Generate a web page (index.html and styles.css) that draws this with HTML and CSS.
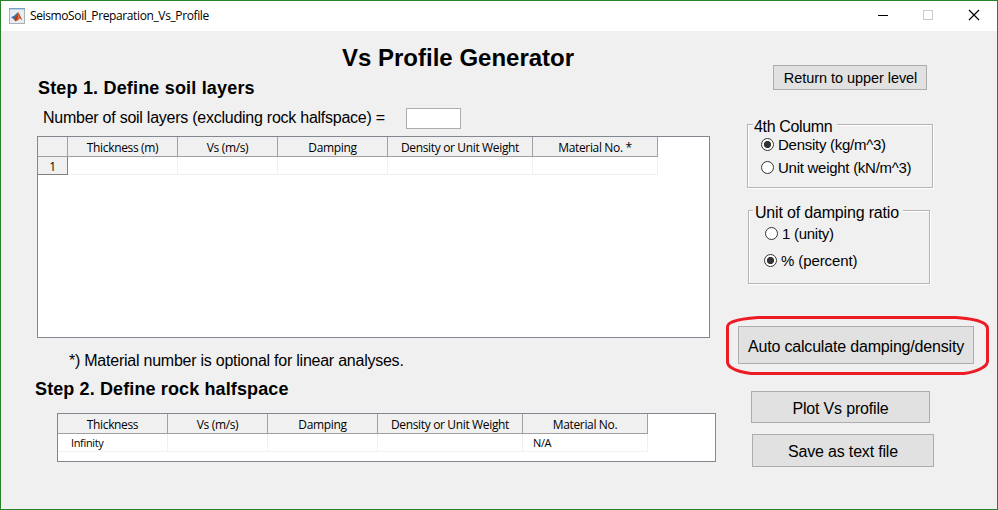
FILE: index.html
```html
<!DOCTYPE html>
<html lang="en">
<head>
<meta charset="utf-8">
<title>SeismoSoil_Preparation_Vs_Profile</title>
<link rel="stylesheet" href="styles.css">
</head>
<body>
<div class="window">
  <header class="titlebar">
    <svg class="app-icon" width="16" height="16" viewBox="0 0 16 16">
      <rect x=".5" y=".5" width="15" height="15" fill="#e9edf0" stroke="#a9b1b8"/>
      <rect x="0" y="0" width="16" height="1" fill="#7f9fbe"/>
      <rect x="1" y="1" width="14" height="1" fill="#b5d2ec"/>
      <path d="M2 9.300 5.500 7.600 8.600 4.200 7.400 9.200 5 11.400z" fill="#3c6ea5"/>
      <path d="M5 11.400 7 9 9 4l1.200 2.800-.7 3.900-2.800 2.700z" fill="#a8331b"/>
      <path d="M9 4c1.200 1.200 2.200 5.500 4.300 8.200L10.800 10.600 8.300 13.300z" fill="#e2702a"/>
      <path d="M9.200 4.300 13.300 12.200 11 9.800z" fill="#9c2a18"/>
    </svg>
    <span class="title">SeismoSoil_Preparation_Vs_Profile</span>
    <svg class="controls" width="110" height="30" viewBox="0 0 110 30" fill="none" shape-rendering="crispEdges">
      <path d="M1 14.500h10" stroke="#000"/>
      <rect x="46.500" y="9.500" width="9" height="9" stroke="#ccc"/>
      <path d="M92 9l10 10M102 9l-10 10" stroke="#000" stroke-width="1.200" shape-rendering="auto"/>
    </svg>
  </header>
  <div class="content">
    <main class="left">
      <h1>Vs Profile Generator</h1>
      <h2 class="step-one">Step 1. Define soil layers</h2>
      <div class="count-row">
        <label for="count">Number of soil layers (excluding rock halfspace) =</label>
        <input id="count" type="text">
      </div>
      <div class="grid soil">
        <div class="row head">
          <div class="cell index"></div>
          <div class="cell">Thickness (m)</div>
          <div class="cell">Vs (m/s)</div>
          <div class="cell">Damping</div>
          <div class="cell">Density or Unit Weight</div>
          <div class="cell">Material No. *</div>
        </div>
        <div class="row">
          <div class="cell index">1</div>
          <div class="cell"></div><div class="cell"></div><div class="cell"></div><div class="cell"></div><div class="cell"></div>
        </div>
      </div>
      <p class="note">*) Material number is optional for linear analyses.</p>
      <h2 class="step-two">Step 2. Define rock halfspace</h2>
      <div class="grid rock">
        <div class="row head">
          <div class="cell">Thickness</div>
          <div class="cell">Vs (m/s)</div>
          <div class="cell">Damping</div>
          <div class="cell">Density or Unit Weight</div>
          <div class="cell">Material No.</div>
        </div>
        <div class="row">
          <div class="cell value-first">Infinity</div>
          <div class="cell"></div><div class="cell"></div><div class="cell"></div>
          <div class="cell value-last">N/A</div>
        </div>
      </div>
    </main>
    <aside class="right">
      <button class="btn return">Return to upper level</button>
      <section class="group column">
        <div class="legend">4th Column</div>
        <label class="radio r1"><i class="dot on"></i><span>Density (kg/m^3)</span></label>
        <label class="radio r2"><i class="dot"></i><span>Unit weight (kN/m^3)</span></label>
      </section>
      <section class="group unit">
        <div class="legend">Unit of damping ratio</div>
        <label class="radio r3"><i class="dot"></i><span>1 (unity)</span></label>
        <label class="radio r4"><i class="dot on"></i><span>% (percent)</span></label>
      </section>
      <div class="auto-wrap">
        <button class="btn auto">Auto calculate damping/density</button>
        <svg class="ring" width="264" height="60" viewBox="0 0 264 60" fill="none">
          <path d="M32 2.500H230Q252 4 259 9Q261.500 11 261.500 14V46Q261.500 50 256 53Q249 57 238 58.500H25Q12 57 5 52.500Q1.500 50 1.500 47V12Q1.500 9 6 7Q15 3.500 32 2.500Z" stroke="#ed1c24" stroke-width="3"/>
        </svg>
      </div>
      <button class="btn plot">Plot Vs profile</button>
      <button class="btn save">Save as text file</button>
    </aside>
  </div>
</div>
</body>
</html>
```

FILE: styles.css
```css
* { box-sizing: border-box; }
body { margin: 0; font-family: "Liberation Sans", Arial, sans-serif; color: #000; white-space: nowrap; }
.window { width: 998px; height: 510px; border: 1px solid #26832a; background: #f0f0f0; overflow: hidden; }
.titlebar { height: 30px; background: #fff; display: flex; align-items: center; padding-left: 8px; }
.app-icon { display: block; margin-top: -1px; }
.title { flex: 1; padding-left: 5px; font: 12px/16px "Open Sans", "Noto Sans", sans-serif; letter-spacing: -0.38px; }
.controls { display: block; margin-right: 10px; }
.content { display: flex; }
.left { width: 724px; }
h1, h2, p { margin: 0; }
h1 { font-size: 24px; line-height: 28px; margin: 13px 0 0 341px; }
h2 { font-size: 18px; line-height: 22px; }
.step-one { margin: 5px 0 0 37px; letter-spacing: 0.18px; }
.count-row { display: flex; align-items: flex-start; margin: 9px 0 0 42px; height: 28px; font-size: 16px; line-height: 20px; letter-spacing: -0.25px; }
.count-row label { width: 363px; }
.count-row input { width: 55px; height: 21px; border: 1px solid #abadb3; background: #fff; padding: 0; }
.grid { background: #fff; border: 1px solid #828790; font-family: "Open Sans", "Noto Sans", sans-serif; font-size: 12px; letter-spacing: -0.35px; }
.soil { width: 673px; height: 202px; margin-left: 36px; }
.rock { width: 659px; height: 49px; margin: 13px 0 0 56px; }
.row { display: grid; grid-template-rows: 100%; height: 18px; line-height: 17px; }
.soil .row { grid-template-columns: 30px 110px 100px 110px 145px 125px; width: 620px; }
.rock .row { grid-template-columns: 110px 100px 110px 145px 125px; width: 590px; }
.cell { border-right: 1px solid #f0f0f0; border-bottom: 1px solid #f0f0f0; }
.row.head { height: 20px; line-height: 21px; }
.head .cell { background: #f0f0f0; border-color: #a0a0a0; text-align: center; }
.cell.index { background: #f0f0f0; border-color: #808080; text-align: center; line-height: 19px; }
.head .cell.index { border-color: #a0a0a0; }
.value-first { padding-left: 13px; font-size: 11px; }
.value-last { padding-left: 10px; font-size: 11px; }
.note { font-size: 16px; line-height: 20px; margin: 13px 0 0 68px; letter-spacing: -0.24px; }
.step-two { margin: 7px 0 0 34px; letter-spacing: 0.12px; }
.right { flex: 1; display: flex; flex-direction: column; align-items: flex-start; }
.btn { border: 1px solid #adadad; background: #e1e1e1; color: #000; font-family: inherit; font-size: 16px; line-height: 18px; letter-spacing: -0.18px; padding: 3px 0 0; text-align: center; }
.return { width: 154px; height: 25px; margin: 34px 0 0 48px; padding: 0 0 0 1px; font-size: 14.5px; letter-spacing: -0.05px; }
.group { position: relative; border: 1px solid #b4b4b4; box-shadow: 1px 1px 0 #fff, inset 1px 1px 0 #fff; }
.column { width: 186px; height: 64px; margin: 34px 0 0 22px; }
.unit { width: 182px; height: 74px; margin: 22px 0 0 23px; }
.legend { position: absolute; left: 5px; top: -8px; height: 18px; padding-left: 1px; background: #f0f0f0; font-size: 16px; line-height: 19px; }
.column .legend { width: 84px; letter-spacing: -0.35px; }
.unit .legend { left: 4px; width: 150px; padding-left: 2px; letter-spacing: -0.2px; }
.unit .legend { letter-spacing: -0.18px; }
.radio { display: flex; align-items: center; gap: 4px; height: 18px; font-size: 15px; letter-spacing: -0.27px; }
.dot { width: 13px; height: 13px; border: 1px solid #333; border-radius: 50%; background: #fff; flex: none; }
.dot.on { background: radial-gradient(circle, #333 3.300px, #fff 3.900px); }
.r1 { margin: 10px 0 0 13px; }
.r2 { margin: 5px 0 0 13px; }
.r3 { margin: 13px 0 0 16px; }
.r4 { margin: 9px 0 0 15px; letter-spacing: -0.1px; }
.auto-wrap { position: relative; margin: 42px 0 0 13px; height: 38px; }
.auto { width: 236px; height: 38px; display: block; }
.ring { position: absolute; left: -12px; top: -11px; pointer-events: none; }
.plot { width: 179px; height: 32px; margin: 27px 0 0 26px; }
.save { width: 182px; height: 33px; margin: 11px 0 0 27px; }
```
